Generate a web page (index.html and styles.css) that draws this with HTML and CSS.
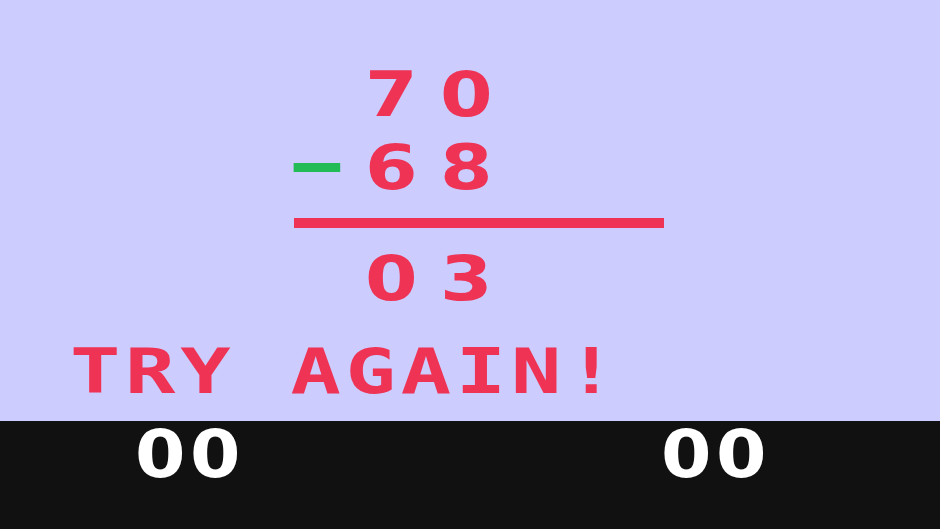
FILE: index.html
```html
<!DOCTYPE html>
<html lang="en">
<head>
    <meta charset="UTF-8">
    <title>Subtraction Drill</title>
    <link rel="stylesheet" href="styles.css">
</head>
<body>
    <!-- Problem area -->
    <div class="board">
        <div class="sum">
            <div class="row">
                <span class="op"></span>
                <span class="num">70</span>
            </div>
            <div class="row">
                <span class="op"><span class="minus">&minus;</span></span>
                <span class="num">68</span>
            </div>
            <div class="rule"></div>
            <div class="row">
                <span class="op"></span>
                <span class="num">03</span>
            </div>
        </div>
        <p class="message">TRY AGAIN!</p>
    </div>

    <!-- Score bar -->
    <div class="scorebar">
        <span class="score">00</span>
        <span class="score">00</span>
    </div>
</body>
</html>
```

FILE: styles.css
```css
/* General Reset */
* {
    margin: 0;
    padding: 0;
    box-sizing: border-box;
}

html, body {
    width: 100%;
    height: 100%;
}

body {
    display: flex;
    flex-direction: column;
    overflow: hidden;
    background-color: #CCCCFF;
    font-family: "DejaVu Sans", sans-serif;
    font-weight: bold;
}

/* Problem area */
.board {
    height: 421px;
    flex-shrink: 0;
    padding-top: 58px;
}

.sum {
    margin-left: 294px;
    width: 370px;
}

.row {
    display: flex;
    align-items: center;
    height: 73px;
}

.op {
    width: 71px;
    font-size: 63px;
    line-height: 1;
}

.minus {
    display: inline-block;
    margin-left: -8px;
    color: #22BB55;
    transform: translateY(-2px) scale(1.18, 1.25);
    transform-origin: left center;
}

.num {
    color: #EE3355;
    font-size: 63px;
    line-height: 1;
    letter-spacing: 18.7px;
    transform: scaleX(1.2);
    transform-origin: left center;
}

.rule {
    height: 10px;
    margin: 14px 0 14px;
    background-color: #EE3355;
}

.message {
    width: fit-content;
    margin: 26px 0 0 70px;
    color: #EE3355;
    font-family: "DejaVu Sans Mono", monospace;
    font-size: 62px;
    line-height: 1;
    letter-spacing: 3.5px;
    transform: scaleX(1.35);
    transform-origin: left center;
}

/* Score bar */
.scorebar {
    flex-grow: 1;
    display: flex;
    gap: 426px;
    padding: 1px 0 0 135px;
    background-color: #111111;
}

.score {
    color: #FFFFFF;
    font-size: 66px;
    line-height: 1;
    letter-spacing: 4.1px;
    transform: scaleX(1.1);
    transform-origin: left center;
}
```
